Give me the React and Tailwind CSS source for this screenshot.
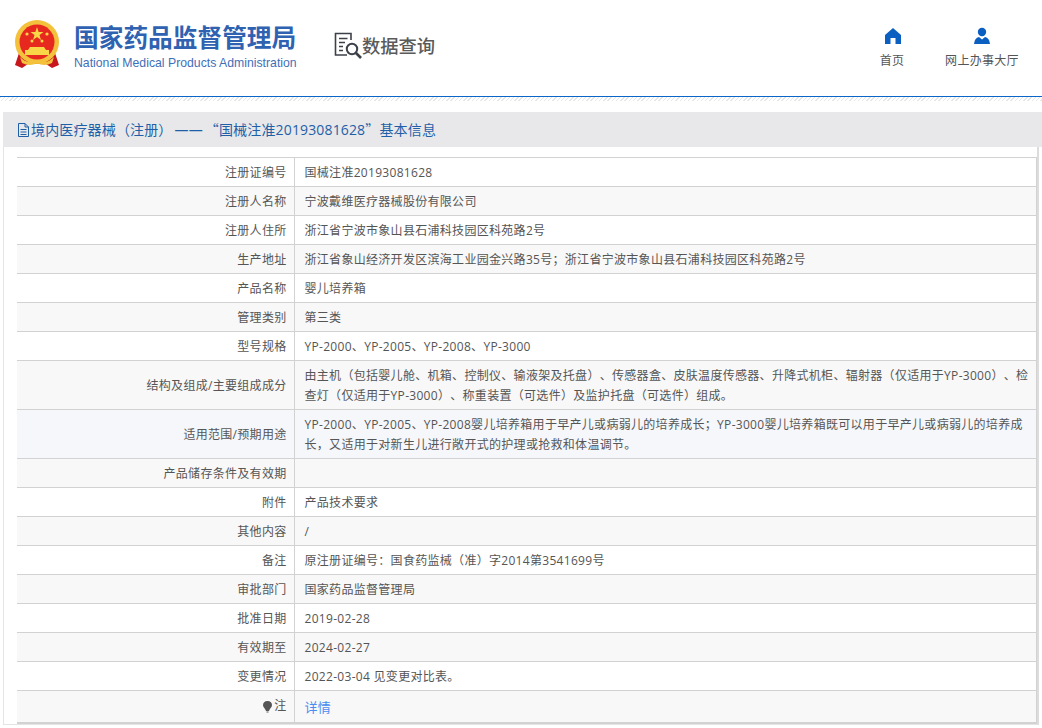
import React from 'react'

const rows = [
  ['注册证编号', '国械注准20193081628'],
  ['注册人名称', '宁波戴维医疗器械股份有限公司'],
  ['注册人住所', '浙江省宁波市象山县石浦科技园区科苑路2号'],
  ['生产地址', '浙江省象山经济开发区滨海工业园金兴路35号；浙江省宁波市象山县石浦科技园区科苑路2号'],
  ['产品名称', '婴儿培养箱'],
  ['管理类别', '第三类'],
  ['型号规格', 'YP-2000、YP-2005、YP-2008、YP-3000'],
  ['结构及组成/主要组成成分', '由主机（包括婴儿舱、机箱、控制仪、输液架及托盘）、传感器盒、皮肤温度传感器、升降式机柜、辐射器（仅适用于YP-3000）、检查灯（仅适用于YP-3000）、称重装置（可选件）及监护托盘（可选件）组成。'],
  ['适用范围/预期用途', 'YP-2000、YP-2005、YP-2008婴儿培养箱用于早产儿或病弱儿的培养成长；YP-3000婴儿培养箱既可以用于早产儿或病弱儿的培养成长，又适用于对新生儿进行敞开式的护理或抢救和体温调节。'],
  ['产品储存条件及有效期', ''],
  ['附件', '产品技术要求'],
  ['其他内容', '/'],
  ['备注', '原注册证编号：国食药监械（准）字2014第3541699号'],
  ['审批部门', '国家药品监督管理局'],
  ['批准日期', '2019-02-28'],
  ['有效期至', '2024-02-27'],
  ['变更情况', '2022-03-04 见变更对比表。'],
]

const Emblem = () => (
  <svg width="46" height="50" viewBox="0 0 46 50" className="shrink-0">
    <path d="M5 33 L1 45 L8 48 L14 44 L32 44 L38 48 L45 45 L41 33 Z" fill="#c8161d" />
    <circle cx="23" cy="22" r="22" fill="#f3c13c" />
    <circle cx="23" cy="22" r="17.5" fill="#e7281f" />
    <polygon points="23,7 24.6,12 29.5,12 25.5,15 27,20 23,17 19,20 20.5,15 16.5,12 21.4,12" fill="#f9d648" />
    <circle cx="13" cy="14" r="1.6" fill="#f9d648" />
    <circle cx="33" cy="14" r="1.6" fill="#f9d648" />
    <circle cx="18" cy="21" r="1.5" fill="#f9d648" />
    <circle cx="28" cy="21" r="1.5" fill="#f9d648" />
    <path d="M16 27 L30 27 L32 30 L35 30 L35 35 L11 35 L11 30 L14 30 Z" fill="#f9d648" />
    <path d="M6 37 Q14 45 20 40 L26 40 Q32 45 40 37 L38 43 Q30 47 23 43 Q16 47 8 43 Z" fill="#f3c13c" />
  </svg>
)

const SearchDocIcon = () => (
  <svg width="28" height="28" viewBox="0 0 28 28" fill="none" stroke="#3c4048" strokeWidth="1.6" className="shrink-0">
    <path d="M13 23 H1.5 V1.5 H17 V8" />
    <path d="M5 6.5 H13.5 M5 10.5 H11 M5 14.5 H9 M5 18.5 H9" />
    <circle cx="18" cy="17" r="5.2" strokeWidth="2" />
    <path d="M22 21 L27 26" strokeWidth="2.6" />
  </svg>
)

export default function App() {
  return (
    <div className="w-[1042px] h-[728px] overflow-hidden bg-white text-[#555] [text-spacing-trim:space-all] font-['Open_Sans','Noto_Sans_CJK_SC',sans-serif]">
      <header className="h-[96px] flex items-start">
        <div className="ml-[14px] mt-[20px]"><Emblem /></div>
        <div className="ml-[14px] mt-[22px] w-[226px]">
          <div className="text-[24.7px] leading-[32px] font-bold text-[#2f62b1] whitespace-nowrap">国家药品监督管理局</div>
          <div className="text-[12.25px] leading-[16px] mt-[1px] text-[#3f6fb8] whitespace-nowrap font-['Liberation_Sans',sans-serif]">National Medical Products Administration</div>
        </div>
        <div className="ml-[34px] mt-[32px] flex items-center">
          <SearchDocIcon />
          <span className="text-[18.3px] leading-[26px] font-medium text-[#5a5a5a]">数据查询</span>
        </div>
        <nav className="ml-auto mr-[23px] mt-[27px] flex gap-[40px] text-[12px] tracking-[0.3px]">
          <div className="flex flex-col items-center w-[26px]">
            <svg width="18" height="18" viewBox="0 0 18 18" className="ml-[1px]"><path d="M9 1 L17 8 V17 H11.5 V11 H6.5 V17 H1 V8 Z" fill="#0b5fc0" /></svg>
            <span className="mt-[7px] leading-[18px] whitespace-nowrap">首页</span>
          </div>
          <div className="flex flex-col items-center w-[74px]">
            <svg width="18" height="18" viewBox="0 0 18 18" fill="#0b5fc0" className="mr-[1px]"><circle cx="9" cy="5" r="4.2" /><path d="M1 17 Q1.5 11 6 10 L9 12.5 L12 10 Q16.5 11 17 17 Z" /></svg>
            <span className="mt-[7px] leading-[18px] whitespace-nowrap">网上办事大厅</span>
          </div>
        </nav>
      </header>
      <div className="h-[5px] border-t-[1.5px] border-[#0b66c8] bg-[repeating-linear-gradient(135deg,#e6e6e6_0,#e6e6e6_1px,#fff_1px,#fff_3px)]" />
      <div className="mt-[11px] ml-[3px]">
        <div className="h-[35px] bg-[#e8e8ea] pl-[14px] flex items-center gap-[1px] text-[14px] tracking-[0.15px] text-[#1f5fa8]">
          <svg width="13" height="14" viewBox="0 0 13 14" fill="none" stroke="#1f5fa8" strokeWidth="1"><path d="M1.5 .5 H8 L11.5 4 V13.5 H1.5 Z M8 .5 V4 H11.5 M3.5 6.5 H9.5 M3.5 9 H9.5 M3.5 11.5 H9.5" /></svg>
          <span className="whitespace-nowrap">
            境内医疗器械（注册）<span className="mx-[2px]">——</span>
            <span className="font-['Noto_Sans_CJK_SC',sans-serif]">“</span>国械注准20193081628<span className="font-['Noto_Sans_CJK_SC',sans-serif]">”</span>基本信息
          </span>
        </div>
        <div className="w-[1036px] pt-[10px] pl-[13px] border-l border-r-2 border-b border-[#e4e4e4] border-r-[#dcdcdc]">
          <table className="w-[1020px] border-collapse text-[12px] tracking-[0.3px] leading-[20px] table-fixed border-r border-[#d2d2d2]">
            <colgroup>
              <col className="w-[277px]" />
              <col />
            </colgroup>
            <tbody>
              {rows.map(([label, value], i) => (
                <tr key={label} className={i === 8 ? 'bg-[#f5f7fb]' : i % 2 ? 'bg-[#f8f8f8]' : 'bg-white'}>
                  <td className="border-t border-[#d2d2d2] border-r text-right pr-[7px] pt-[5px] pb-[3px] align-middle">{label}</td>
                  <td className="border-t border-[#d2d2d2] pl-[10px] pr-[7px] pt-[5px] pb-[3px] align-middle">{value || <span>&nbsp;</span>}</td>
                </tr>
              ))}
              <tr className="bg-[#f8f8f8]">
                <td className="border-t border-b-2 border-[#d2d2d2] border-r text-right pr-[7px] pt-[5px] pb-[3px]">
                  <span className="inline-flex items-center justify-end gap-[1px]">
                    <svg width="11" height="13" viewBox="0 0 11 13"><path d="M5.5 1 C8.5 1 10 3 10 5.2 C10 7.5 7.5 8.5 7 11 H4 C3.5 8.5 1 7.5 1 5.2 C1 3 2.5 1 5.5 1 Z" fill="#555" /><path d="M4.5 12 H6.5" stroke="#555" /></svg>
                    注
                  </span>
                </td>
                <td className="border-t border-b-2 border-[#d2d2d2] pl-[10px] pt-[5px] pb-[3px] text-[#4a8cf0] text-[13px]">详情</td>
              </tr>
            </tbody>
          </table>
        </div>
      </div>
    </div>
  )
}
